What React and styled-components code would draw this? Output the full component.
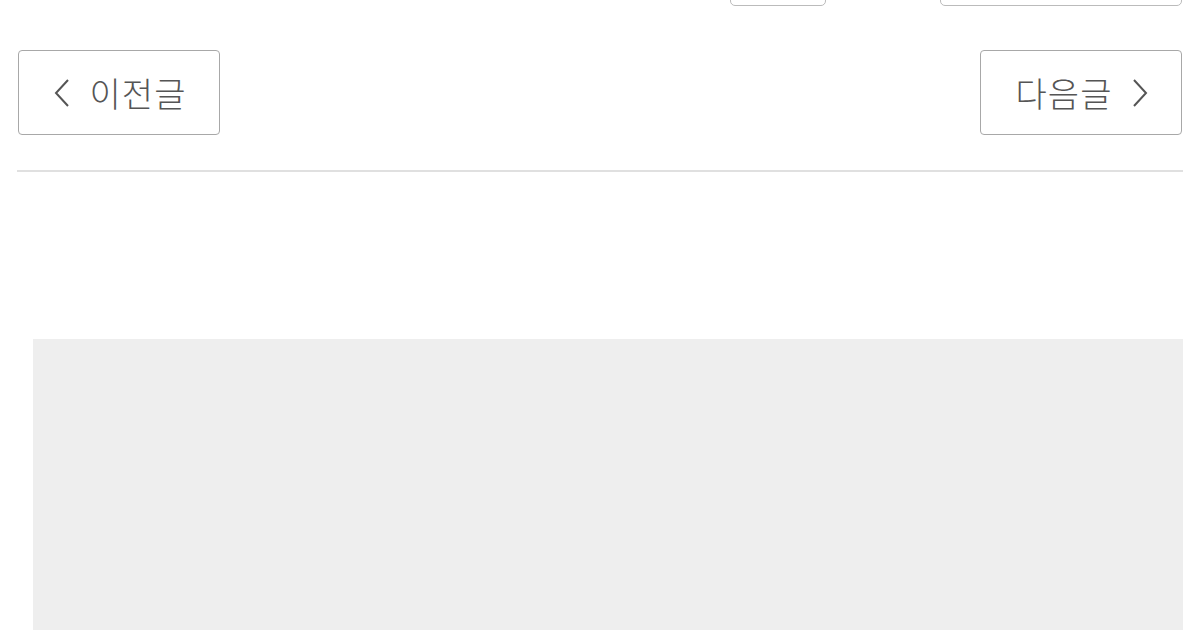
import styled, { createGlobalStyle } from "styled-components";

const GlobalStyle = createGlobalStyle`
  body {
    margin: 0;
    background: #ffffff;
    font-family: "Noto Sans CJK KR", "Noto Sans", sans-serif;
  }
`;

function Chevron({ dir }) {
  const d = dir === "left" ? "M14 2 L2 15 L14 28" : "M2 2 L14 15 L2 28";
  return (
    <svg width="16" height="30" viewBox="0 0 16 30">
      <path d={d} fill="none" stroke="#555" strokeWidth="2" />
    </svg>
  );
}

export default function App() {
  return (
    <>
      <GlobalStyle />
      <Page>
        <TopStrip>
          <CutBox $gap={730} $width={96} />
          <CutBox $gap={114} $width={242} />
        </TopStrip>
        <NavRow>
          <NavButton>
            <Chevron dir="left" />
            <span>이전글</span>
          </NavButton>
          <NavButton>
            <span>다음글</span>
            <Chevron dir="right" />
          </NavButton>
        </NavRow>
        <Divider />
        <Placeholder />
      </Page>
    </>
  );
}

const Page = styled.div`
  width: 1200px;
  height: 630px;
  overflow: hidden;
  display: flex;
  flex-direction: column;
`;

const TopStrip = styled.div`
  height: 6px;
  overflow: hidden;
  display: flex;
  align-items: flex-end;
`;

const CutBox = styled.div`
  flex: none;
  margin-left: ${(p) => p.$gap}px;
  width: ${(p) => p.$width}px;
  height: 40px;
  border: 1px solid #bbbbbb;
  border-radius: 5px;
  box-sizing: border-box;
`;

const NavRow = styled.div`
  display: flex;
  justify-content: space-between;
  padding: 44px 18px 0 18px;
`;

const NavButton = styled.button`
  width: 202px;
  height: 85px;
  box-sizing: border-box;
  background: #ffffff;
  border: 1.5px solid #a8a8a8;
  border-radius: 4px;
  display: flex;
  align-items: center;
  justify-content: center;
  gap: 20px;
  padding: 0 0 0 2px;
  font-family: "Noto Sans CJK KR", "Noto Sans", sans-serif;
  font-size: 34px;
  font-weight: 300;
  color: #555555;
  cursor: pointer;
  span {
    line-height: 1;
    letter-spacing: 1px;
  }
`;

const Divider = styled.div`
  margin: 35px 17px 0 17px;
  height: 2px;
  background: #e0e0e0;
`;

const Placeholder = styled.div`
  margin: 167px 17px 0 33px;
  flex: 1;
  background: #eeeeee;
`;
